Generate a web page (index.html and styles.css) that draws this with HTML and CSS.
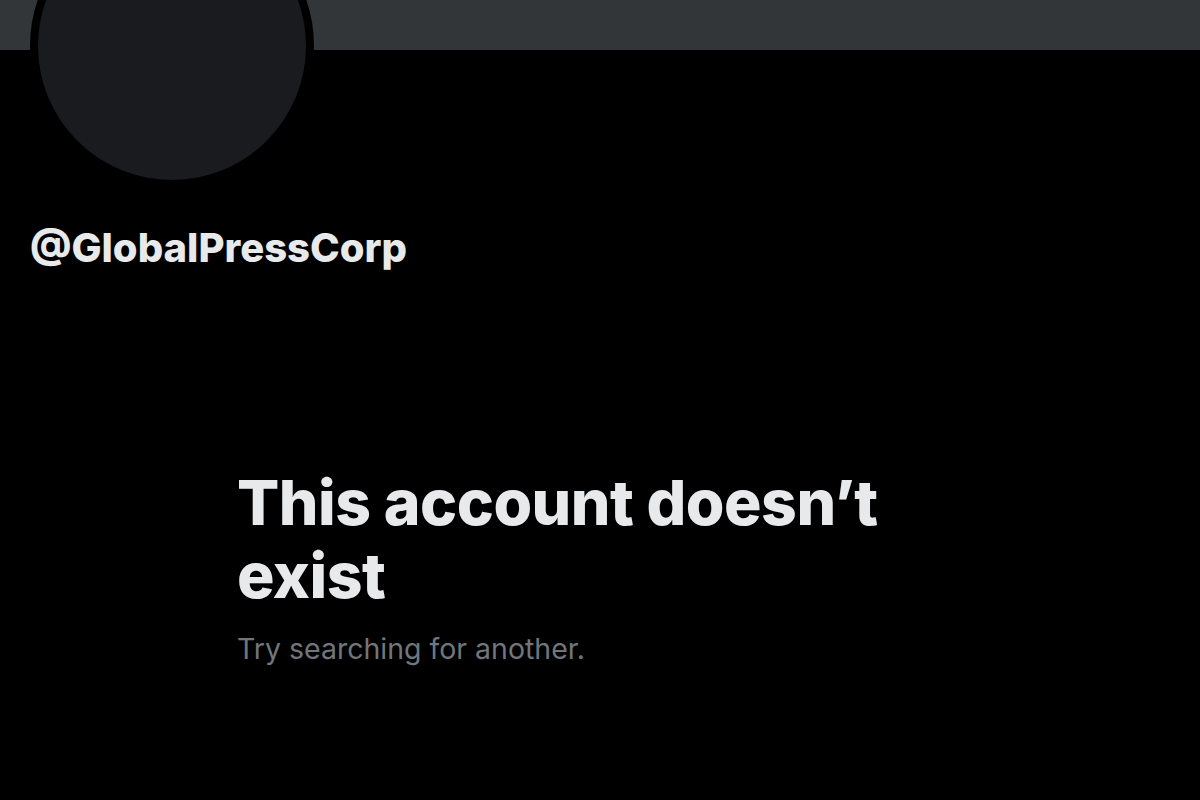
FILE: index.html
```html
<!DOCTYPE html>
<html lang="en">
<head>
    <meta charset="UTF-8">
    <meta name="viewport" content="width=device-width, initial-scale=1.0">
    <title>Profile</title>
    <link rel="stylesheet" href="styles.css">
</head>
<body>
    <div class="banner"></div>

    <div class="profile">
        <div class="avatar"></div>
        <div class="handle">@GlobalPressCorp</div>
    </div>

    <!-- Prázdný stav -->
    <div class="empty">
        <h1>This account doesn’t exist</h1>
        <p>Try searching for another.</p>
    </div>
</body>
</html>
```

FILE: styles.css
```css
body {
    font-family: Inter, "Noto Sans", sans-serif;
    background-color: #000000;
    margin: 0;
    padding: 0;
    overflow: hidden;
}

.banner {
    height: 50px;
    background-color: #333639;
}

.profile {
    padding-left: 30px;
}

.avatar {
    width: 268px;
    height: 268px;
    margin-top: -146px;
    border: 8px solid #000000;
    border-radius: 50%;
    background-color: #1a1b1f;
}

.handle {
    margin-top: 35px;
    color: #e7e9ea;
    font-size: 40px;
    font-weight: 800;
    line-height: 50px;
}

.empty {
    width: 660px;
    margin-top: 193px;
    padding-left: 237px;
}

.empty h1 {
    margin: 0;
    color: #e7e9ea;
    font-size: 62.5px;
    font-weight: 800;
    line-height: 73px;
    letter-spacing: -0.5px;
}

.empty p {
    margin: 19px 0 0 0;
    color: #71767b;
    font-size: 28.5px;
    line-height: 36px;
}
```
